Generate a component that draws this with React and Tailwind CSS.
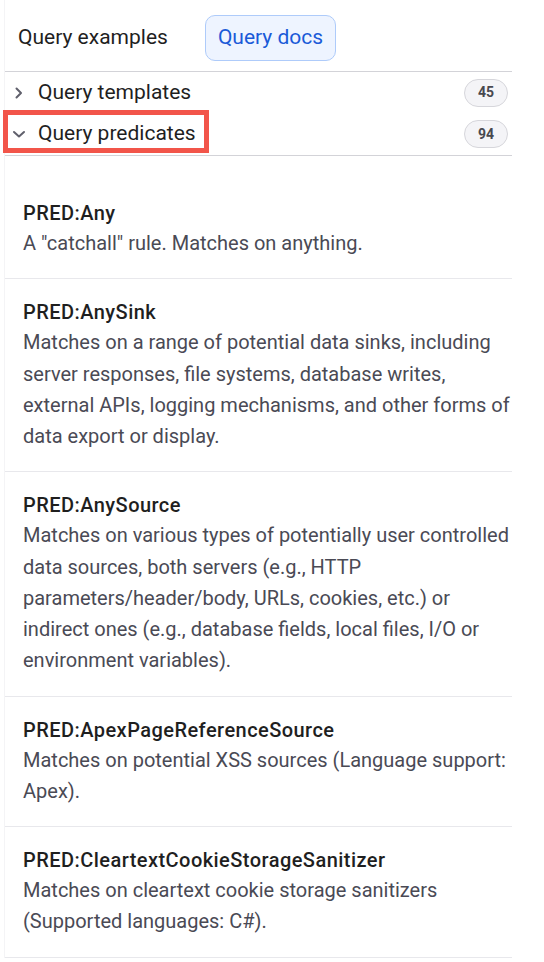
import React, { useState } from "react";

const predicates = [
  {
    name: "PRED:Any",
    desc: 'A "catchall" rule. Matches on anything.',
  },
  {
    name: "PRED:AnySink",
    desc: "Matches on a range of potential data sinks, including server responses, file systems, database writes, external APIs, logging mechanisms, and other forms of data export or display.",
  },
  {
    name: "PRED:AnySource",
    desc: "Matches on various types of potentially user controlled data sources, both servers (e.g., HTTP parameters/header/body, URLs, cookies, etc.) or indirect ones (e.g., database fields, local files, I/O or environment variables).",
  },
  {
    name: "PRED:ApexPageReferenceSource",
    desc: "Matches on potential XSS sources (Language support: Apex).",
  },
  {
    name: "PRED:CleartextCookieStorageSanitizer",
    desc: "Matches on cleartext cookie storage sanitizers (Supported languages: C#).",
  },
];

const Chevron = ({ open }) => (
  <svg
    width="14"
    height="14"
    viewBox="0 0 14 14"
    fill="none"
    stroke="#60606c"
    strokeWidth="2"
    strokeLinecap="round"
    strokeLinejoin="round"
    className="shrink-0"
  >
    {open ? <path d="M2 5l5 4.5L12 5" /> : <path d="M4.5 2.5 9 7l-4.5 4.5" />}
  </svg>
);

const Badge = ({ count }) => (
  <span className="ml-auto mr-[4px] flex h-[28px] w-[44px] items-center justify-center rounded-full border border-[#d6d6db] bg-[#f4f4f7] text-[14px] font-bold text-[#48484f]">
    {count}
  </span>
);

const App = () => {
  const [tab, setTab] = useState("docs");
  const [open, setOpen] = useState({ templates: false, predicates: true });

  return (
    <div className="min-h-[962px] w-[544px] bg-white font-['Roboto',sans-serif]">
      <div className="ml-[4px] w-[508px] border-l border-[#f4f4f6]">
        {/* Tabs */}
        <div className="flex h-[72px] items-center gap-[37px] border-b border-[#d3d3d8] pt-[5px] pl-[13px]">
          <button
            onClick={() => setTab("examples")}
            className={`flex h-[46px] items-center rounded-[10px] text-[21px] ${
              tab === "examples"
                ? "border border-[#aecbfa] bg-[#eef4ff] px-[13px] text-[#1a5ad8]"
                : "text-[#1f1f1f]"
            }`}
          >
            Query examples
          </button>
          <button
            onClick={() => setTab("docs")}
            className={`flex h-[46px] items-center rounded-[10px] text-[21px] ${
              tab === "docs"
                ? "border border-[#aecbfa] bg-[#eef4ff] px-[12px] text-[#1a5ad8]"
                : "text-[#1f1f1f]"
            }`}
          >
            Query docs
          </button>
        </div>

        {/* Accordion headers */}
        <div className="border-b border-[#d3d3d8]">
          <button
            onClick={() => setOpen({ ...open, templates: !open.templates })}
            className="flex h-[41px] w-full items-center pl-[7px] text-[21px] text-[#1f1f1f]"
          >
            <Chevron open={open.templates} />
            <span className="ml-[12px]">Query templates</span>
            <Badge count={45} />
          </button>
          <div className="relative">
            <button
              onClick={() => setOpen({ ...open, predicates: !open.predicates })}
              className="flex h-[42px] w-full items-center pl-[7px] text-[21px] text-[#1f1f1f]"
            >
              <Chevron open={open.predicates} />
              <span className="ml-[12px]">Query predicates</span>
              <Badge count={94} />
            </button>
            {/* highlight annotation */}
            <div className="pointer-events-none absolute left-[-2px] top-[-3px] h-[43px] w-[206px] border-[5px] border-[#f2554a]" />
          </div>
        </div>

        {/* Predicate list */}
        {open.predicates && (
          <div className="pt-[24px]">
            {predicates.map((p) => (
              <div key={p.name} className="border-b border-[#e8e8ec] pt-[18px] pb-[19px] pl-[18px]">
                <div className="w-[488px]">
                  <div className="text-[20px] font-medium leading-[30px] tracking-[0.45px] text-[#1f1f1f]">{p.name}</div>
                  <p className="text-[20px] leading-[31.25px] text-[#4a4a55]">{p.desc}</p>
                </div>
              </div>
            ))}
          </div>
        )}
      </div>
    </div>
  );
};

export default App;
